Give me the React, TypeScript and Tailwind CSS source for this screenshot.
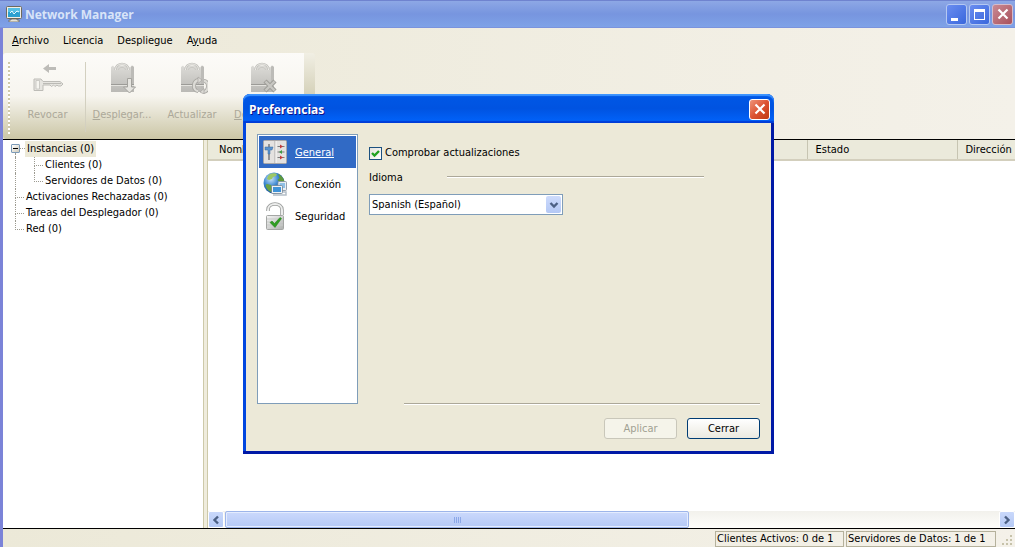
import { useState, type ReactNode } from "react";

const dots = "border-dotted border-[#9c9a90]";

function AppIcon() {
  return (
    <svg viewBox="0 0 16 16" className="h-4 w-4" aria-hidden="true">
      <rect x="0.5" y="0.5" width="15" height="12" rx="1" fill="#f1efe6" stroke="#6d6a5e" />
      <rect x="2" y="2" width="12" height="9" fill="#2aa0d0" />
      <rect x="2" y="2" width="12" height="4" fill="#56bfe4" />
      <path d="M4 7l2-2 2 3 3-3 2 1" fill="none" stroke="#e9fbff" />
      <path d="M5 13h6v1h2v2H3v-2h2z" fill="#e6e3d6" stroke="#5d5a50" strokeWidth="0.7" />
    </svg>
  );
}

function KeyIcon() {
  return (
    <svg viewBox="0 0 32 32" className="h-8 w-8" aria-hidden="true">
      <path d="M11 6.500l6-4.500v3h7v3h-7v3z" fill="#bdbcb8" />
      <path d="M2 17h7l2 2.500h17l3 2.500-2 2h-3l-1-1-2 1.500-1.500-1.500-2 1.500L18 23h-7v5.500H2z" fill="#e6e5e0" stroke="#bdbcb7" />
      <path d="M4 18.500h3.500v8.500H4z" fill="#f6f5f0" stroke="#c3c2bd" strokeWidth="0.8" />
      <path d="M11 21.500h18" stroke="#bbbab5" />
    </svg>
  );
}

function BagIcon({ kind }: { kind: "down" | "sync" | "remove" }) {
  return (
    <svg viewBox="0 0 32 32" className="h-8 w-8" aria-hidden="true">
      <defs>
        <linearGradient id={`bag-${kind}`} x1="0" x2="0" y1="0" y2="1">
          <stop offset="0" stopColor="#dcdbd7" />
          <stop offset="1" stopColor="#bab9b5" />
        </linearGradient>
      </defs>
      <path d="M5 5l2-1.500 1.500 2L11 4h11l2 1.500L26 3.500 28 5v25H5z" fill={`url(#bag-${kind})`} />
      <path d="M25 5l1-1.500L28 5v25h-3z" fill="#bcbbb7" />
      <path d="M9.500 8c0-8 13-8 13 0" fill="none" stroke="#c3c2bd" strokeWidth="2.500" />
      <path d="M9.500 8c0-8 13-8 13 0" fill="none" stroke="#eeede9" strokeWidth="1" />
      <path d="M12.500 8c0-3.500 7-3.500 7 0" fill="none" stroke="#c9c8c3" />
      <path d="M5 22.500h23" stroke="#9c9b97" />
      <path d="M5 23.500h23" stroke="#e4e3de" />
      {kind === "down" && (
        <path d="M21.500 16.500h4V25h4l-6 6-6-6h4z" fill="#e6e5e0" stroke="#a3a29d" />
      )}
      {kind === "sync" && (
        <g fill="none">
          <path d="M23 18c-7 1-6 11-1 11M27 30c7-1 6-11 1-11" stroke="#a6a5a0" strokeWidth="4" />
          <path d="M23 18c-7 1-6 11-1 11M27 30c7-1 6-11 1-11" stroke="#dcdbd6" strokeWidth="2.400" />
          <path d="M22 15l4 3-4 3.500zM28 26.500l-4 3.500 4 2z" fill="#dcdbd6" stroke="#a6a5a0" strokeWidth="0.700" />
        </g>
      )}
      {kind === "remove" && (
        <g>
          <path d="M19 19l10 10M29 19L19 29" stroke="#a09f9a" strokeWidth="4.500" />
          <path d="M19.500 19.500l9 9M28.500 19.500l-9 9" stroke="#c8c7c2" strokeWidth="2.400" />
        </g>
      )}
    </svg>
  );
}

function SlidersIcon() {
  return (
    <svg viewBox="0 0 24 24" className="h-6 w-6" aria-hidden="true">
      <rect x="0.500" y="0.500" width="23" height="23" rx="1" fill="#e4e2e0" stroke="#a9a7a8" />
      <path d="M12 1v22" stroke="#aaa8a8" />
      <path d="M13 1v22" stroke="#faf9f8" />
      <path d="M6 4v16" stroke="#77777d" strokeWidth="1.500" />
      <path d="M2 7h8l-1 3H7v4H5v-4H2z" fill="#5a92cd" stroke="#39689c" strokeWidth="0.500" />
      <path d="M14.500 6.500h7M14.500 12h7M14.500 17.500h7" stroke="#7b7b7b" />
      <path d="M17 4.500l3 2-3 2z" fill="#c23b3b" />
      <path d="M19 10l-3 2 3 2z" fill="#3f9a45" />
      <path d="M17 15.500l3 2-3 2z" fill="#c23b3b" />
    </svg>
  );
}

function GlobeIcon() {
  return (
    <svg viewBox="0 0 24 24" className="h-6 w-6" aria-hidden="true">
      <defs>
        <radialGradient id="sea" cx="0.350" cy="0.300" r="0.800">
          <stop offset="0" stopColor="#c9e4fa" />
          <stop offset="0.450" stopColor="#3a86d0" />
          <stop offset="1" stopColor="#0d3f8c" />
        </radialGradient>
      </defs>
      <circle cx="11" cy="11" r="10.500" fill="url(#sea)" />
      <path d="M7 2c2-1 6-1 7 0l-1 2-3 1-1 2-3 1-2-1 1-3z" fill="#9cc765" />
      <path d="M15 2c3 1 6 4 6.500 8l-4 1-3-3 2-2z" fill="#5f9a3c" />
      <path d="M4 12l4 1 1.500 3L8 20c-3-1-5-4-5.500-7z" fill="#6aa344" />
      <rect x="15" y="9.500" width="8.500" height="9" rx="1" fill="#e9eef2" stroke="#7d8d9d" strokeWidth="0.800" />
      <rect x="16.500" y="11" width="5.500" height="5" fill="#8fc0e6" />
      <rect x="8.500" y="13.500" width="11" height="8" rx="1" fill="#eef2f5" stroke="#6f8090" strokeWidth="0.800" />
      <rect x="10" y="15" width="8" height="5" fill="#3f93d8" />
      <path d="M10 23h13v-3h-3" fill="none" stroke="#b4bec7" strokeWidth="1.500" />
    </svg>
  );
}

function LockIcon() {
  return (
    <svg viewBox="0 0 24 28" className="h-7 w-6" aria-hidden="true">
      <defs>
        <linearGradient id="steel" x1="0" x2="1" y1="0" y2="1">
          <stop offset="0" stopColor="#f6f6f6" />
          <stop offset="1" stopColor="#aeb0ae" />
        </linearGradient>
      </defs>
      <path d="M5 9V8c0-8 14-8 14 0v5" fill="none" stroke="#9b9d9c" strokeWidth="3.600" />
      <path d="M5 9V8c0-8 14-8 14 0v5" fill="none" stroke="#ecedec" strokeWidth="2" />
      <rect x="3.500" y="13.500" width="17" height="14" rx="1" fill="url(#steel)" stroke="#a4a6a4" />
      <path d="M4 17h16M4 20h16M4 23h16" stroke="#c9cbc9" />
      <path d="M7 20.500l2-1.500 2.500 2.500 5.500-6 1.500 1-6.500 9z" fill="#2f9e22" stroke="#1d7a14" strokeWidth="0.500" />
    </svg>
  );
}

function Cross() {
  return (
    <svg viewBox="0 0 12 12" className="h-3 w-3" aria-hidden="true">
      <path d="M1.500 1.500l9 9M10.500 1.500l-9 9" stroke="#fff" strokeWidth="2.200" />
    </svg>
  );
}

function Chevron({ className = "" }: { className?: string }) {
  return (
    <svg viewBox="0 0 10 10" className={`h-[10px] w-[10px] ${className}`} aria-hidden="true">
      <path d="M1.500 3l3.500 3.500L8.500 3" fill="none" stroke="#4d6185" strokeWidth="2.400" />
    </svg>
  );
}

function ToolButton({ label, width, children }: { label: ReactNode; width: string; children: ReactNode }) {
  return (
    <button disabled className={`flex shrink-0 flex-col items-center gap-[14px] whitespace-nowrap text-[#aca899] ${width}`}>
      {children}
      <span>{label}</span>
    </button>
  );
}

function Branch({ last = false }: { last?: boolean }) {
  return (
    <span className="flex w-[9px] flex-col">
      <span className={`h-[9px] border-b border-l ${dots}`} />
      <span className={`h-[7px] ${last ? "" : `border-l ${dots}`}`} />
    </span>
  );
}

const menus = [
  ["", "A", "rchivo"],
  ["Licencia", "", ""],
  ["Despliegue", "", ""],
  ["A", "y", "uda"],
];

const sections = [
  { name: "General", icon: <SlidersIcon /> },
  { name: "Conexión", icon: <GlobeIcon /> },
  { name: "Seguridad", icon: <LockIcon /> },
];

const captionButton = "flex h-[21px] w-[21px] items-center justify-center rounded-[3px] border";
const scrollButton =
  "flex w-4 items-center justify-center rounded-[2px] border border-white bg-linear-to-b from-[#c9d8fb] to-[#b6caf5]";

function Preferences() {
  const [section, setSection] = useState("General");
  const [checked, setChecked] = useState(true);
  return (
    <div
      role="dialog"
      aria-labelledby="prefs-title"
      className="flex h-[360px] w-[531px] flex-col rounded-t-[7px] border-b-[3px] border-[#0019a6] bg-[#0831d9]"
    >
      <header className="flex h-[29px] items-center justify-between rounded-t-[7px] bg-linear-to-b from-[#0058e6] via-[#0053e1] to-[#0164fc] pt-px pr-1 pl-[6px] shadow-[inset_0_2px_1px_#3d95ff,inset_0_-2px_1px_#003dd7]">
        <h2 id="prefs-title" className="pt-px font-['Open_Sans',sans-serif] text-[12px] font-bold text-white [text-shadow:1px_1px_#0f1089]">
          Preferencias
        </h2>
        <button aria-label="Cerrar ventana" className={`${captionButton} border-white bg-linear-to-br from-[#ee9379] via-[#dc5231] to-[#c03a12]`}>
          <Cross />
        </button>
      </header>
      <div className="flex flex-1 gap-[11px] border-x-[3px] border-r-[#0019a6] border-l-[#0046e0] bg-[#ece9d8] px-[11px] pt-[11px] pb-3">
        <nav className="h-[270px] w-[101px] shrink-0 border border-[#7f9db9] bg-white p-px">
          {sections.map((s) => (
            <button
              key={s.name}
              onClick={() => setSection(s.name)}
              className={`flex h-8 w-full items-center gap-2 pl-1 ${section === s.name ? "bg-[#316ac5] text-white underline" : ""}`}
            >
              {s.icon}
              <span className="pt-px">{s.name}</span>
            </button>
          ))}
        </nav>
        <div className="flex flex-1 flex-col">
          <label className="mt-3 flex h-[14px] items-center gap-[3px] self-start">
            <span className="grid h-[13px] w-[13px] place-items-center">
              <input
                type="checkbox"
                checked={checked}
                onChange={(e) => setChecked(e.target.checked)}
                className="peer col-start-1 row-start-1 h-[13px] w-[13px] appearance-none border border-[#1c5180] bg-linear-to-br from-[#e3e2dc] to-white"
              />
              <svg viewBox="0 0 9 9" className="pointer-events-none invisible col-start-1 row-start-1 h-[9px] w-[9px] peer-checked:visible" aria-hidden="true">
                <path d="M1 4l2.500 2.500L8 2" fill="none" stroke="#21a121" strokeWidth="2.400" />
              </svg>
            </span>
            Comprobar actualizaciones
          </label>
          <div className="mt-[9px] mr-14 flex h-4 items-center">
            <label htmlFor="language" className="w-[78px] pt-px">Idioma</label>
            <span className="h-[2px] flex-1 border-t border-[#aca899] bg-white" />
          </div>
          <div className="mt-[9px] grid h-[21px] w-[194px] items-center">
            <select id="language" className="col-start-1 row-start-1 h-[21px] w-full appearance-none border border-[#7f9db9] bg-white pt-px pl-[2px] text-black">
              <option>Spanish (Español)</option>
            </select>
            <span className="pointer-events-none col-start-1 row-start-1 mr-[2px] flex h-[17px] w-[15px] items-center justify-center justify-self-end rounded-[2px] bg-linear-to-b from-[#cddbfc] to-[#b4c8f5]">
              <Chevron />
            </span>
          </div>
          <div className="mt-auto ml-[35px] h-[2px] border-t border-[#aca899] bg-white" />
          <div className="mt-[13px] flex justify-end gap-[10px]">
            <button disabled className="h-[21px] w-[73px] rounded-[3px] border border-[#c9c7ba] bg-[#f5f4ea] pt-px text-[#a1a192]">
              Aplicar
            </button>
            <button className="h-[21px] w-[73px] rounded-[3px] border border-[#003c74] bg-linear-to-b from-white to-[#ebe9e0] pt-px">
              Cerrar
            </button>
          </div>
        </div>
      </div>
    </div>
  );
}

export default function App() {
  return (
    <div className="flex h-screen min-h-[480px] flex-col overflow-hidden bg-linear-to-r from-[#ece9d8] to-[#f4f1e9] font-['DejaVu_Sans_Condensed','DejaVu_Sans',sans-serif] text-[11px] leading-[14px] text-black">
      <header className="flex h-7 shrink-0 items-center bg-linear-to-b from-[#8fa9e6] via-[#7795df] to-[#7fa3e8] pr-[2px] pl-[6px] shadow-[inset_0_1px_#6f83cf,inset_0_-1px_#7a93dd]">
        <AppIcon />
        <h1 className="ml-[3px] flex-1 pt-[2px] font-['Open_Sans',sans-serif] text-[12px] font-bold text-[#d8e4f8]">Network Manager</h1>
        <div className="flex gap-[2px] text-white">
          <button aria-label="Minimizar" className={`${captionButton} items-end justify-start border-[#b5c8f2] bg-linear-to-br from-[#6a8df0] to-[#3a67dc] pb-[3px] pl-1`}>
            <span className="h-[3px] w-[7px] bg-white" />
          </button>
          <button aria-label="Maximizar" className={`${captionButton} border-[#b5c8f2] bg-linear-to-br from-[#6a8df0] to-[#3a67dc]`}>
            <span className="h-[11px] w-[11px] border border-t-[3px] border-white" />
          </button>
          <button aria-label="Cerrar" className={`${captionButton} border-[#d4bccb] bg-linear-to-br from-[#c98a94] to-[#a9505c]`}>
            <Cross />
          </button>
        </div>
      </header>

      <div className="flex min-h-0 flex-1 flex-col border-l-[3px] border-[#7b83d8]">
        <nav className="flex h-[25px] shrink-0 items-center gap-[14px] pl-[9px]">
          {menus.map(([a, b, c]) => (
            <button key={a + b + c}>
              {a}
              <u>{b}</u>
              {c}
            </button>
          ))}
        </nav>

        <div className="flex h-[87px] shrink-0 border-b border-black">
          <div className="flex w-[301px] shrink-0 items-start rounded-l-[3px] bg-linear-to-b from-[#fcfbf8] via-[#f7f5ef] via-50% to-[#cbc6a6] pt-[9px] pl-[5px]">
            <span className="h-[74px] w-[2px] bg-[repeating-linear-gradient(to_bottom,#cfc9a8_0_2px,#fff_2px_4px)]" />
            <ToolButton label="Revocar" width="w-[75px]">
              <KeyIcon />
            </ToolButton>
            <span className="h-[70px] w-px bg-[#d3d0c0]" />
            <ToolButton label={<><u>D</u>esplegar...</>} width="w-[72px]">
              <BagIcon kind="down" />
            </ToolButton>
            <ToolButton label="Actualizar" width="w-[68px]">
              <BagIcon kind="sync" />
            </ToolButton>
            <ToolButton label={<><u>D</u>esinstalar</>} width="w-[72px]">
              <BagIcon kind="remove" />
            </ToolButton>
          </div>
          <span className="w-[11px] rounded-r-[3px] bg-linear-to-b from-[#f1efe4] to-[#b8b28c]" />
        </div>

        <main className="flex min-h-0 flex-1">
          <ul className="w-[200px] shrink-0 bg-white pt-px pl-2">
            <li>
              <div className="flex h-4">
                <span className="flex w-[9px] flex-col pt-[3px]">
                  <button aria-label="Contraer Instancias" className="flex h-[9px] w-[9px] items-center justify-center rounded-[1px] border border-[#7b9ab8] bg-linear-to-br from-white to-[#cfcabb]">
                    <span className="h-px w-[5px] bg-black" />
                  </button>
                  <span className={`ml-1 h-1 border-l ${dots}`} />
                </span>
                <span className={`h-2 w-[5px] border-b ${dots}`} />
                <span className="bg-[#ece9d8] px-[2px] leading-4">Instancias (0)</span>
              </div>
              <ul>
                {["Clientes (0)", "Servidores de Datos (0)"].map((t, i) => (
                  <li key={t} className="flex h-4 pl-1">
                    <span className={`w-[19px] border-l ${dots}`} />
                    <Branch last={i === 1} />
                    <span className="pl-[2px] leading-4">{t}</span>
                  </li>
                ))}
              </ul>
            </li>
            {["Activaciones Rechazadas (0)", "Tareas del Desplegador (0)", "Red (0)"].map((t, i) => (
              <li key={t} className="flex h-4 pl-1">
                <Branch last={i === 2} />
                <span className="pl-[2px] leading-4">{t}</span>
              </li>
            ))}
          </ul>
          <div className="w-[5px] shrink-0 border-x border-[#cdc9a9] bg-[#efecdd]" />
          <section className="flex min-w-0 flex-1 flex-col bg-white">
            <div className="min-h-0 flex-1 overflow-hidden">
              <table className="w-full min-w-[900px] table-fixed border-collapse">
                <thead>
                  <tr className="h-5 border-b-2 border-[#d3cfbd] bg-[#ebeadb] text-left">
                    <th className="w-[599px] pl-[11px] font-normal">Nombre</th>
                    <th className="w-[150px] border-l border-[#c7c5b2] pl-2 font-normal">Estado</th>
                    <th className="border-l border-[#c7c5b2] pl-2 font-normal">Dirección IP</th>
                  </tr>
                </thead>
              </table>
            </div>
            <div className="flex h-[17px] shrink-0 bg-linear-to-b from-[#f2f1ec] to-[#fefefb]">
              <button aria-label="Desplazar a la izquierda" className={scrollButton}>
                <Chevron className="rotate-90" />
              </button>
              <div className="flex flex-1 pl-px">
                <div className="flex w-[60%] items-center justify-center gap-px rounded-[2px] border border-[#9db5ea] bg-linear-to-b from-[#cbd9fc] to-[#b5c9f6] shadow-[inset_0_0_0_1px_#e4ecfe]">
                  {[0, 1, 2, 3].map((n) => (
                    <span key={n} className="h-[6px] w-px bg-[#8ca8e8]" />
                  ))}
                </div>
              </div>
              <button aria-label="Desplazar a la derecha" className={scrollButton}>
                <Chevron className="-rotate-90" />
              </button>
            </div>
          </section>
        </main>

        <footer className="flex h-[19px] shrink-0 justify-end gap-[2px] border-t border-black pt-[2px]">
          <span className="h-4 w-[129px] border border-[#b5b19c] pl-px whitespace-nowrap">Clientes Activos: 0 de 1</span>
          <span className="h-4 w-[150px] border border-[#b5b19c] pl-px whitespace-nowrap">Servidores de Datos: 1 de 1</span>
          <svg viewBox="0 0 17 16" className="h-4 w-[17px]" aria-hidden="true">
            <path d="M12 4h2v2h-2zM8 8h2v2H8zM12 8h2v2h-2zM4 12h2v2H4zM8 12h2v2H8zM12 12h2v2h-2z" fill="#c6c2aa" />
          </svg>
        </footer>
      </div>

      <div className="pointer-events-none absolute inset-0 flex items-center justify-center pt-px pl-[2px] *:pointer-events-auto">
        <Preferences />
      </div>
    </div>
  );
}
